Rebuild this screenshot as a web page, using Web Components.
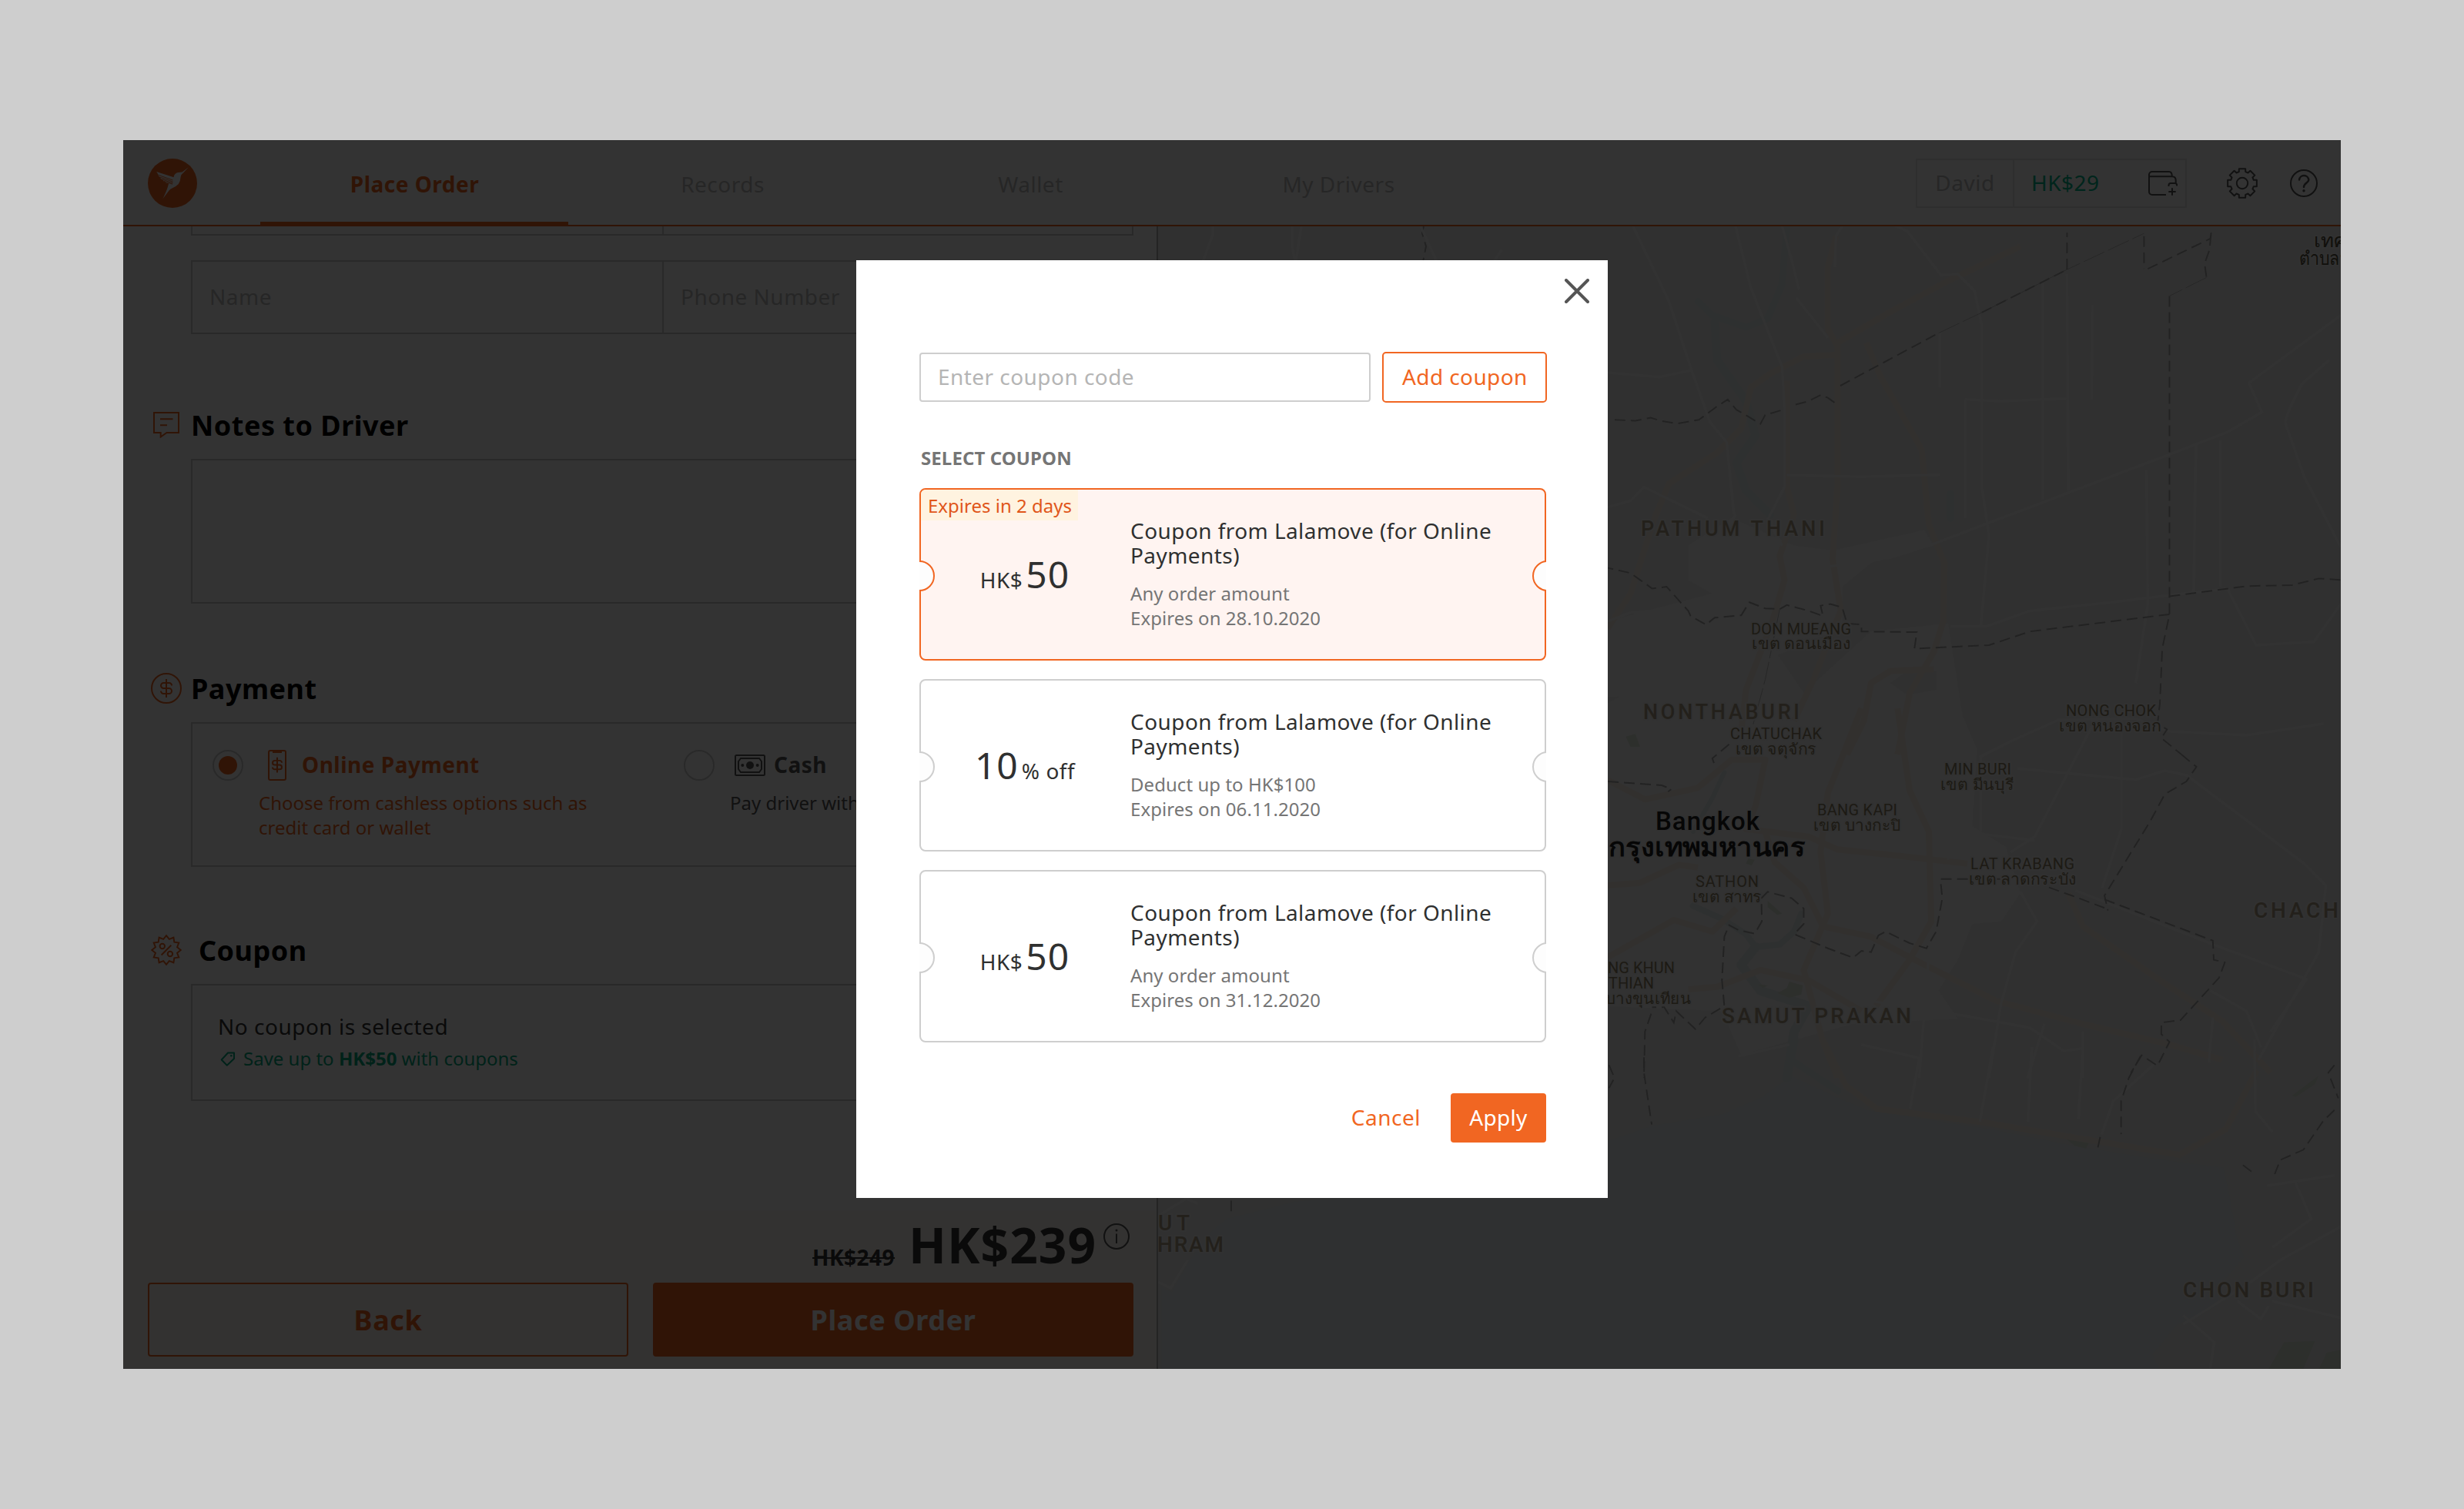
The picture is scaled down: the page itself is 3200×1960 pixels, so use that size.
<!DOCTYPE html>
<html lang="en">
<head>
<meta charset="utf-8">
<title>Place Order</title>
<style>
  html, body { margin: 0; height: 100%; background: #cecece; }
  body { font: 28px/40px "Noto Sans", sans-serif; letter-spacing: .5px; color: #333; }
</style>
</head>
<body>
<order-page></order-page>
<script>
const define = (name, html, setup) => {
  const tpl = document.createElement('template');
  tpl.innerHTML = html;
  customElements.define(name, class extends HTMLElement {
    connectedCallback() {
      if (this.shadowRoot) return;
      const root = this.attachShadow({ mode: 'open' });
      root.append(tpl.content.cloneNode(true));
      if (setup) setup(this, root);
    }
  });
};
const polar = (cx, cy, r, deg) => {
  const a = (deg - 90) * Math.PI / 180;
  return (cx + r * Math.cos(a)).toFixed(2) + ' ' + (cy + r * Math.sin(a)).toFixed(2);
};
const gear = () => {
  let d = '';
  for (let i = 0; i < 8; i++) {
    const a = i * 45;
    d += (i ? 'L' : 'M') + polar(20, 20, 15.4, a - 16) + 'L' + polar(20, 20, 19.3, a - 12.5)
       + 'L' + polar(20, 20, 19.3, a + 12.5) + 'L' + polar(20, 20, 15.4, a + 16);
  }
  return d + 'Z';
};
const burst = () => {
  let d = '';
  for (let i = 0; i < 12; i++) d += (i ? 'L' : 'M') + polar(20, 20, 18.8, i * 30) + 'L' + polar(20, 20, 14.6, i * 30 + 15);
  return d + 'Z';
};
const DOLLAR = 'M27 16.500v-.3a3.200 3.200 0 0 0-3.200-3.200h-7.300a3.500 3.500 0 0 0 0 7h7a3.500 3.500 0 0 1 0 7h-7.300a3.200 3.200 0 0 1-3.200-3.200v-.3M20 8v24';
const ICONS = {
  logo: [64, 64, '<g stroke="none"><circle cx="32" cy="32" r="32" fill="#f16622"/><path fill="#fff" d="M52.800 11.200 46 18.600Q43.300 20.500 42.700 23.500 42.300 29.500 39.800 33 36 37 31.500 38.500 29 39.500 27.500 41.500L19.400 52.300Q25 41 26.800 33.500L27.500 32.600 23.600 31.600 22.500 30 20.500 29.200 19 27.200 17 26.200 15.800 24 14 22.800 13.500 20.800 11.200 17 33.600 24.300Q33.800 20.500 36.800 18.900 39 17.700 44.600 17.600Z"/></g><path stroke="#f16622" stroke-width=".9" d="M14 21.500 32.500 28M16 24.300 32.500 30M18.500 27 32.500 31.800M21 29.500 32 33.200"/>'],
  wallet: [38, 32, '<path d="M23 31H5a4 4 0 0 1-4-4V5a4 4 0 0 1 4-4h22q3.800 0 3.800 6M1 4v3.200h30q4.700 0 4.700 5V16M26.500 20v-1.500q0-2.500 2.500-2.500h6q2.300 0 2.300 3.500M31 22.300v9.500M26.300 27h9.400"/>'],
  gear: [40, 40, `<path stroke-linejoin="round" d="${gear()}"/><circle cx="20" cy="20" r="7.200"/>`],
  help: [36, 36, '<circle cx="18" cy="18" r="17"/><path stroke-width="2.500" stroke-linecap="round" d="M12 13.500a6.200 6.200 0 0 1 12.300 0C24.300 17.500 18 17.800 18 23"/><circle cx="18" cy="27.700" r="1.700" fill="currentColor" stroke="none"/>'],
  note: [34, 34, '<path d="M1 1H33V27H17.500L9.700 32.500V27H1ZM9 9.200H25.500M9 17.200H18"/>'],
  money: [40, 40, `<circle cx="20" cy="20" r="19"/><path d="${DOLLAR}"/>`],
  percent: [40, 40, `<path stroke-linejoin="miter" d="${burst()}"/><circle cx="14.800" cy="15" r="3.200"/><circle cx="24.900" cy="25" r="3.200"/><path d="M26.300 13.800 13.600 26.500"/>`],
  phone: [24, 40, `<rect x="1" y="1" width="22" height="38" rx="2"/><path fill="currentColor" stroke="none" d="M6 1H18V4H6Z"/><path transform="translate(-5 3.200) scale(.85 .82)" stroke-width="2.400" d="${DOLLAR}"/>`],
  cash: [40, 28, '<rect x="1" y="1" width="38" height="26" rx="1.500"/><path d="M8 5H32L35 9V19L32 23H8L5 19V9Z"/><circle cx="20" cy="14" r="5" fill="currentColor" stroke="none"/><circle cx="10.300" cy="14" r="2" fill="currentColor" stroke="none"/><circle cx="29.700" cy="14" r="2" fill="currentColor" stroke="none"/>'],
  tag: [20, 20, '<path stroke-linejoin="round" d="M10 1.500H18V9L8.800 17.800 1.700 10.500Z"/><circle cx="14.300" cy="5.300" r="1.300" fill="currentColor" stroke="none"/>'],
  info: [34, 34, '<circle cx="17" cy="17" r="16"/><path d="M17 13.500V26"/><circle cx="17" cy="9" r="1.500" fill="currentColor" stroke="none"/>'],
  close: [32, 32, '<path stroke-width="4" stroke-linecap="round" d="M2 2 30 30M30 2 2 30"/>']
};
define('ui-icon', '<style>:host{display:block;flex:none;line-height:0}svg{display:block}</style>', (el, root) => {
  const [w, h, body] = ICONS[el.getAttribute('name')];
  root.innerHTML += `<svg width="${w}" height="${h}" viewBox="0 0 ${w} ${h}" fill="none" stroke="currentColor" stroke-width="2">${body}</svg>`;
});

define('nav-tab', `<style>
  :host{display:flex;justify-content:center;width:400px;height:112px;box-sizing:border-box;padding:37px 0 0 1px;color:#bdbdbd}
  :host([active]){color:#f16622;font-weight:700;border-bottom:6px solid #f16622}
</style><slot></slot>`);

define('top-bar', `<style>
  :host{display:flex;height:112px;box-sizing:border-box;border-bottom:2px solid #f16622;background:#fff;padding-left:32px}
  .logo{margin:24px 82px 0 0}
  nav{display:flex}
  .tools{display:flex;align-items:flex-start;margin:24px 30px 0 auto;color:#555}
  .acct{display:flex;box-sizing:border-box;width:352px;height:64px;border:2px solid #e3e3e3;line-height:58px;color:#bdbdbd}
  .name{width:124px;border-right:2px solid #e3e3e3;text-align:center}
  .bal{color:#00b98c;padding-left:22px;flex:1}
  .acct ui-icon{margin:14px 10px 0 0;color:#555}
  .gear{margin:12px 0 0 52px}.help{margin:14px 0 0 42px}
</style>
<ui-icon class="logo" name="logo"></ui-icon>
<nav><nav-tab active>Place Order</nav-tab><nav-tab>Records</nav-tab><nav-tab>Wallet</nav-tab><nav-tab>My Drivers</nav-tab></nav>
<div class="tools">
  <div class="acct"><span class="name">David</span><span class="bal">HK$29</span><ui-icon name="wallet"></ui-icon></div>
  <ui-icon class="gear" name="gear"></ui-icon><ui-icon class="help" name="help"></ui-icon>
</div>`);

define('section-title', `<style>
  :host{display:flex;align-items:center;height:48px;margin-left:36px;gap:12px;font-size:36px;font-weight:700;letter-spacing:.5px;color:#000}
  .i{width:40px;display:flex;justify-content:center;color:#f16622}
  .t{padding-top:2px}
</style><span class="i"></span><span class="t"><slot></slot></span>`, (el, root) => {
  root.querySelector('.i').innerHTML = `<ui-icon name="${el.getAttribute('icon')}"></ui-icon>`;
});

define('field-box', `<style>
  :host{display:flex;box-sizing:border-box;margin-left:88px;width:1224px;border:2px solid #cecece}
</style><slot></slot>`);

define('pay-option', `<style>
  :host{display:block;flex:none;width:612px;color:#555}
  :host([checked]){color:#f16622}
  .row{display:flex;align-items:center;height:40px}
  .radio{width:40px;height:40px;box-sizing:border-box;border:2px solid #cecece;border-radius:50%;display:flex;align-items:center;justify-content:center}
  :host([checked]) .radio::after{content:"";width:24px;height:24px;border-radius:50%;background:#f16622}
  .label{font-weight:700;line-height:38px;padding-bottom:2px}
  p{margin:13px 0 0 60px;width:460px;font-size:24px;line-height:32px;letter-spacing:0}
</style>
<div class="row"><span class="radio"></span><slot name="icon"></slot><span class="label"><slot name="label"></slot></span></div>
<p><slot></slot></p>`);

define('price-footer', `<style>
  :host{display:block;height:206px;box-sizing:border-box;background:#fffaf3;padding:0 30px 0 32px}
  .price{display:flex;justify-content:flex-end;align-items:flex-start;height:94px;padding-right:5px;color:#333;font-weight:700}
  s{margin:41px 18px 0 0}
  b{font-weight:700;font-size:64px;line-height:88px;letter-spacing:1px;margin-top:1px}
  ui-icon{margin:17px 0 0 9px;color:#555}
  .btns{display:flex;gap:32px}
  .btns div{width:624px;height:96px;box-sizing:border-box;border:2px solid #f16622;border-radius:4px;color:#f16622;font-size:36px;font-weight:700;letter-spacing:.6px;line-height:94px;text-align:center}
  .btns .main{background:#f16622;color:#fff}
</style>
<div class="price"><s>HK$249</s><b>HK$239</b><ui-icon name="info"></ui-icon></div>
<div class="btns"><div>Back</div><div class="main">Place Order</div></div>`);

define('order-form', `<style>
  :host{display:flex;flex-direction:column;width:1342px;height:1484px;background:#fff;border-right:2px solid #b5b5b5}
  .cut{height:12px;border-top:0}
  .contact{height:96px;margin-top:32px;line-height:90px;color:#bdbdbd}
  .half{width:610px;border-right:2px solid #cecece}
  .contact .half,.contact .rest{padding-left:22px}
  .contact .half{width:588px}
  .t1{margin-top:94px}.t2{margin-top:86px}.t3{margin-top:84px;gap:22px}
  .notes{height:188px;margin-top:20px}
  .pay{height:188px;margin-top:20px;padding:34px 26px}
  .coupon{height:152px;margin-top:20px;padding:33px;flex-direction:column;color:#333}
  .save{display:flex;font-size:24px;line-height:36px;letter-spacing:0;color:#00a87e;margin-top:4px}
  .save ui-icon{margin:9px 10px 0 3px}
  .phone{margin:0 20px 0 32px}.cash{margin:0 11px 0 26px}
  price-footer{margin-top:auto}
</style>
<field-box class="cut"><div class="half"></div></field-box>
<field-box class="contact"><div class="half">Name</div><div class="rest">Phone Number</div></field-box>
<section-title class="t1" icon="note">Notes to Driver</section-title>
<field-box class="notes"></field-box>
<section-title class="t2" icon="money">Payment</section-title>
<field-box class="pay">
  <pay-option checked><ui-icon slot="icon" class="phone" name="phone"></ui-icon><span slot="label">Online Payment</span>Choose from cashless options such as credit card or wallet</pay-option>
  <pay-option><ui-icon slot="icon" class="cash" name="cash"></ui-icon><span slot="label">Cash</span>Pay driver with</pay-option>
</field-box>
<section-title class="t3" icon="percent">Coupon</section-title>
<field-box class="coupon"><div>No coupon is selected</div><div class="save"><ui-icon name="tag"></ui-icon><span>Save up to <b>HK$50</b> with coupons</span></div></field-box>
<price-footer></price-footer>`);

/* Map geometry is stored per survey sheet: origin and scale of each sheet, then its points. */
const SHEET = { a: [2080, 280, 1.6, 2.24], b: [2080, 920, 1.6, 3], c: [1480, 1350, .9924, 3] };
const line = (s, pts) => {
  const [ox, oy, sx, sy] = SHEET[s], n = pts.trim().split(/[ ,]+/).map(Number);
  let d = '';
  for (let i = 0; i < n.length; i += 2) d += (i ? 'L' : 'M') + (ox + n[i] / sx).toFixed(1) + ' ' + (oy + n[i + 1] / sy).toFixed(1);
  return d;
};
const BORDERS = [
  ['a','27,594 70,597 102,588 125,598 158,605 202,594 240,555 262,535 280,565 305,585 330,606 340,580 372,567'],
  ['a','403,550 430,540 455,522 470,530 484,544'],
  ['a','496,495 700,342'], ['a','967,157 967,50'], ['a','790,282 967,157'], ['a','1127,60 1127,155'],
  ['a','1135,155 1265,67 1267,45 1263,100 1253,140 1257,180'], ['a','1180,234 1180,1108 1180,1160 1165,1260 1160,1420 1155,1480 1175,1495 1163,1520 1205,1568'],
  ['a','1180,1108 1340,1078 1435,1075 1490,1056 1536,1060'],
  ['a','1180,1160 890,1210 805,1250 650,1260 655,1212 540,1210 540,1190 510,1187 500,1140 475,1130 455,1135 460,1165 430,1150 385,1133 370,1145 340,1143 307,1125 290,1163 235,1170 217,1190 185,1165 180,1150 135,1080 105,1085 60,1040 13,1025'],
  ['b','1205,180 1236,228 1215,285 1170,335 1140,440 1045,730 1052,788'],
  ['b','1045,745 1270,905 1272,980 1295,990 1283,1050 1203,1215 1163,1225 1163,1270 1180,1300 1155,1393 1122,1352 1100,1420'],
  ['c','1290,65 1275,150 1265,240 1265,370'], ['c','1238,380 1235,422'],
  ['b','265,140 230,195 235,222'], ['b','13,285 125,300 145,315 138,325'],
  ['b','1045,778 985,735 925,695'], ['b','705,665 830,665'],
  ['b','705,685 708,740 695,870 675,935 640,915 590,870 575,885 560,950 540,945 523,972 470,935 400,880 420,840 420,780 395,740 345,715 332,740 333,830 318,878 285,865 265,845 255,890 250,1060 255,1160 215,1205 195,1250 155,1180 150,1225 130,1165 105,1165'],
  ['b','103,1190 90,1260 88,1440'], ['c','650,70 650,130 660,332'],
  ['c','605,100 612,150 605,190'], ['c','118,628 118,686'],
  ['c','1540,100 1532,130 1545,230'], ['c','1540,275 1525,320 1500,430 1470,470 1463,525'], ['c','1433,515 1420,485']
];
/* Stretches where the boundary is drawn as a hairline beside a road. */
const HAIRLINES = [['a','700,342 790,282 967,157 1127,52'], ['a','370,1145 340,1350 315,1480'], ['a','1257,180 1180,234']];
const ROADS = [
  ['a','278,30 310,210 375,440 380,560 380,790 345,885 375,960'], ['a','65,30 140,250 187,450 225,600 260,660 275,870'],
  ['a','610,30 635,45 705,173 740,170 775,220 790,320 790,790 805,930 788,1195'], ['a','405,240 470,355'],
  ['a','1536,290 1345,487 1372,572 1300,630 1180,695 690,955 600,995 430,1030'], ['a','1420,600 1460,760 1536,965'],
  ['a','917,190 917,825'], ['a','967,170 970,800'], ['a','1020,260 1018,535'], ['a','755,535 755,880'], ['a','755,535 830,540 967,532'],
  ['a','703,340 703,500'], ['a','1132,740 1135,1130 1110,1360'], ['a','1235,665 1230,1100'], ['a','1286,655 1286,1080'],
  ['a','385,755 540,760 703,754'], ['a','13,848 60,830 88,790 220,880'], ['a','13,1180 60,1155 120,1150 310,1110'],
  ['a','375,30 395,130 410,215'], ['a','500,30 487,60 485,150'], ['a','187,450 120,470 13,457'],
  ['a','725,1195 800,1195 890,1150 1060,1125 1180,1105 1300,1085'], ['a','13,1235 60,1215 200,1248 240,1290'],
  ['a','120,1150 98,1280 100,1568'], ['a','1300,1085 1335,1180 1360,1250 1480,1240 1536,1130'],
  ['a','245,1110 245,950 278,870'], ['a','1512,420 1455,490 1430,560 1420,600'],
  ['b','785,190 860,120 950,45 1110,40 1180,90 1340,105 1500,60'], ['b','865,235 1110,278 1170,243 1215,260 1460,605 1505,690 1490,950 1365,1370'],
  ['b','985,710 1270,920 1465,1055 1390,1260'], ['b','540,1135 760,1200 890,1245 960,1335 1000,1325'],
  ['b','788,190 788,480'], ['b','1030,30 900,500 850,560'], ['b','1080,30 1080,470 1040,700'],
  ['b','870,715 905,830 860,950 830,1150 805,1440'], ['b','720,590 720,510 790,490 900,515'],
  ['b','285,1355 390,1310'], ['b','540,1310 665,1365'], ['b','920,1230 885,1440'], ['b','1000,1260 1000,1440'], ['b','13,560 150,520 250,530'],
  ['b','680,960 660,1440'], ['b','1265,1100 1340,1180 1370,1320'], ['b','1270,1205 1262,1380'],
  ['c','1005,70 993,270'], ['c','1100,30 1083,320'], ['c','1150,30 1145,320'], ['c','1215,60 1210,310'], ['c','1240,370 1255,240 1310,90'],
  ['c','1437,0 1438,280 1460,360'], ['c','1453,570 1540,530'], ['c','1490,560 1510,700 1460,810'], ['c','1548,730 1470,860 1430,950 1345,1110'],
  ['c','1345,1075 1385,1180 1380,1280'], ['c','1460,1020 1548,1085'], ['c','1415,1020 1445,1090 1455,1040'], ['c','28,680 60,620 75,640'], ['c','62,860 40,970 24,945']
];
const HIGHWAYS = [
  ['a','870,90 720,190 600,280 490,370'], ['a','487,60 470,150 470,330 490,380 490,790 480,1000 497,1150 440,1350 400,1470'],
  ['a','550,370 580,470 665,680 680,900 712,1010 710,1180 690,1270 640,1390 615,1568'],
  ['a','490,405 420,410 350,460 310,500 290,620 240,690 140,780 110,880 60,1100 13,1200'],
  ['a','385,480 385,790 400,870 370,990 380,1060 355,1180 300,1380 290,1500'], ['a','690,1320 600,1325 560,1360 545,1470 510,1568'],
  ['b','540,0 470,330 455,560 470,800 420,1020 460,1300 490,1440'], ['b','615,0 640,320 680,480 685,830 640,980 570,1160'],
  ['b','13,280 90,355 200,310 270,200 340,200 320,380 300,470 430,500 490,550 620,575 760,605'],
  ['b','13,970 150,825 230,870 280,780'], ['b','340,480 360,600 420,700 460,850 560,890 640,970 820,1140 1000,1230 1180,1310 1290,1370'],
  ['b','180,1095 240,1085 330,1020 430,1060 540,1180'], ['b','13,690 80,680 160,610 200,620'],
  ['b','970,720 1000,850 1160,1060 1290,1220 1390,1420'], ['c','880,0 910,180 950,270 1090,325 1200,380 1340,450 1400,350 1440,120']
];
const WATER = [
  ['a','385,30 375,200 345,300 300,325 230,290 200,250', 9], ['a','235,310 240,420 300,540 320,640 280,720 300,800 350,870', 11],
  ['b','255,250 230,350 190,480', 6], ['b','190,770 250,820 300,880 320,930 370,920 400,870 415,800', 8],
  ['b','320,930 290,1000 330,1100 430,1160 400,1260 385,1440', 12], ['c','845,0 840,80 900,200', 9]
];
const LABELS = [
  ['PATHUM THANI',2131,695.5,239,27,'p'],['NONTHABURI',2134,934,203,27,'p'],['SAMUT PRAKAN',2236,1328.5,246,28,'p'],['CHON BURI',2835,1684.500,170,28,'p'],
  ['UT',1504,1597.5,41,28,'p'],['HRAM',1503,1625.5,86,28,'p'],['CHACHO',2927,1191.5,133,28,'p'],
  ['DON MUEANG',2274,823.8,130,20,'d'],['เขต ดอนเมือง',2275,843,129,20,'d'],['NONG CHOK',2683,929.6,117,20,'d'],['เขต หนองจอก',2674,949.6,133,20,'d'],
  ['CHATUCHAK',2247,960,119,20,'d'],['เขต จตุจักร',2254,979.5,105,20,'d'],['MIN BURI',2525,1006,87,20,'d'],['เขต มีนบุรี',2520,1026,96,20,'d'],
  ['BANG KAPI',2360,1058.7,104,20,'d'],['เขต บางกะปิ',2355,1078.5,114,20,'d'],['LAT KRABANG',2559,1129,135,20,'d'],['เขต ลาดกระบัง',2557,1149,140,20,'d'],
  ['SATHON',2202,1152,82,20,'d'],['เขต สาทร',2198,1172,90,20,'d'],['NG KHUN',2088,1264,87,20,'d'],['THIAN',2089,1284,59,20,'d'],['บางขุนเทียน',2085,1303.5,111,20,'d'],
  ['Bangkok',2150,1077.7,135,33,'c'],['กรุงเทพมหานคร',2089,1111.7,255,34,'c b'],['เทศ',3005,320.7,42,24,'t'],['ตำบลบ',2986,344,66,24,'t']
];
define('city-map', `<style>
  :host{display:block;width:1536px;height:1484px;background:#f1f1f1;overflow:hidden}
  svg{display:block;font-family:Roboto,"Noto Sans",sans-serif;letter-spacing:0}
  .road{fill:none;stroke:#fafafa;stroke-width:3}.hw{fill:none;stroke:#f8efe6;stroke-width:8;stroke-linejoin:round}
  .water{fill:none;stroke:#e6eff0;stroke-linecap:round;stroke-linejoin:round}
  .bd{fill:none;stroke:#acacac;stroke-width:2;stroke-dasharray:14 7}
  .hair{fill:none;stroke:#c0c0c0;stroke-width:1;stroke-dasharray:30 5}
  text{paint-order:stroke;stroke:#f5f5f5;stroke-width:4;stroke-linejoin:round}
  .p{fill:#afa287;font-weight:500}.d{fill:#8f8366}.t{fill:#55503c}.c{fill:#222;font-weight:500}.b{font-weight:600}
</style>`, (el, root) => {
  const sea = line('c', '40,970 62,850 90,740 110,690 200,620 500,560 603,385 660,325 750,280 800,215 840,130 900,215 940,265 1100,340 1200,400 1300,450 1400,490 1408,600 1418,770 1428,850 1400,950 1390,1050 1340,1120 1310,1230 1320,1300 24,1300 24,945') + 'Z';
  const urban = line('b', '13,-20 180,-190 350,-250 420,-60 560,-300 720,-330 750,30 780,160 770,460 840,540 870,720 830,830 770,840 740,980 700,1100 740,1210 520,1230 290,1350 250,1180 13,1160') + 'Z';
  const urban2 = line('a', '180,960 270,880 400,960 480,975 670,915 690,960 560,1010 500,1080 500,1200 160,1400 13,1400 13,1180 230,1100 180,1060') + 'Z';
  const text = LABELS.map(([t, x, y, w, s, c]) => {
    const thai = /[\u0E00-\u0E7F]/.test(t);
    return `<text class="${c}" x="${x}" y="${y}" font-size="${s}" textLength="${w}" lengthAdjust="${thai ? 'spacingAndGlyphs' : 'spacing'}">${t}</text>`;
  }).join('');
  root.innerHTML += `<svg width="1536" height="1484" viewBox="1504 294 1536 1484">
    <path fill="#f8f8f8" d="${urban}${urban2}"/>
    <path fill="#e8eff2" stroke="#edf0f0" stroke-width="8" d="${sea}"/>
    <path fill="#f0f0f0" d="${line('a', '600,1360 640,1320 695,1325 695,1380 635,1395')}Z"/>
    <path class="water" stroke-width="10" d="${line('a', '725,810 725,880')}"/>
    ${WATER.map(([s, p, w]) => `<path class="water" stroke-width="${w}" d="${line(s, p)}"/>`).join('')}
    <g fill="#e2e9dc"><path d="${line('b', '365,1110 385,1090 390,1065 418,1080 415,1115 390,1128')}Z"/><path d="${line('b', '50,110 70,100 80,150 60,150')}Z"/><path d="${line('b', '345,750 375,800 365,805 345,775')}Z"/><path d="${line('b', '305,585 318,590 312,612 300,605')}Z"/><path d="${line('b', '325,1075 345,1080 335,1090')}Z"/>
    <path d="${line('c', '1475,1180 1515,1175 1500,1284 1455,1284')}Z"/><path d="${line('c', '1530,1220 1548,1210 1548,1284 1520,1284')}Z"/><path d="${line('c', '1485,220 1520,140 1515,175 1490,225')}Z"/><path d="${line('c', '1195,390 1225,395 1220,425 1205,415')}Z"/></g>
    ${HIGHWAYS.map(([s, p]) => `<path class="hw" d="${line(s, p)}"/>`).join('')}
    ${ROADS.map(([s, p]) => `<path class="road" d="${line(s, p)}"/>`).join('')}
    ${HAIRLINES.map(([s, p]) => `<path class="hair" d="${line(s, p)}"/>`).join('')}
    ${BORDERS.map(([s, p]) => `<path class="bd" d="${line(s, p)}"/>`).join('')}
    <path class="bd" d="M1849 294 1847 303 1852 320 1848 340"/>
    <path class="road" d="M1845 294 1866 340M1575 294V305L1562 340M1678 294V320L1682 340M1690 294 1683 340M1950 325 1940 340"/>
    ${text}</svg>`;
});

define('coupon-card', `<style>
  :host{display:block;position:relative;overflow:hidden;width:814px;height:224px;--line:#cecece;--fill:#fff}
  :host([selected]){--line:#f16622;--fill:#fff4f1}
  .card{display:flex;box-sizing:border-box;height:224px;border:2px solid var(--line);border-radius:8px;background:var(--fill)}
  .card::before,.card::after{content:"";position:absolute;top:94px;width:36px;height:36px;border:2px solid var(--line);border-radius:50%;background:#fdfdfd}
  .card::before{left:-20px}.card::after{right:-22px}
  .amount{display:flex;justify-content:center;align-items:baseline;gap:4px;box-sizing:border-box;width:272px;height:56px;margin-top:82px;padding-right:2px;color:#2f3030}
  .amount ::slotted(b){font-weight:400;font-size:48px;line-height:56px;letter-spacing:1px}
  .info{width:490px;padding-top:37px;line-height:32px;letter-spacing:.43px}
  .info p{margin:18px 0 0;font-size:24px;letter-spacing:.05px;color:#757575}
  .tag{position:absolute;left:2px;top:2px;width:195px;height:40px;padding-left:9px;border-top-left-radius:6px;background:#fff3e0;color:#e0561a;font-size:24px;line-height:41px;letter-spacing:0}
  .title{color:#2f3030}
</style>
<div class="card">
  <div class="amount"><slot name="amount"></slot></div>
  <div class="info"><div class="title"><slot></slot></div><p><slot name="terms"></slot></p></div>
</div>`, (el, root) => {
  if (el.hasAttribute('notice')) {
    const tag = document.createElement('div');
    tag.className = 'tag';
    tag.textContent = el.getAttribute('notice');
    root.append(tag);
  }
});

define('coupon-dialog', `<style>
  :host{display:flex;flex-direction:column;box-sizing:border-box;width:976px;height:1218px;padding:24px 79px 72px 82px;background:#fff}
  .close{align-self:flex-end;margin-right:-55px;color:#555}
  .form{display:flex;align-items:center;justify-content:space-between;height:66px;margin-top:63px}
  .input{width:586px;height:64px;box-sizing:border-box;border:2px solid #cecece;border-radius:4px;padding-left:22px;line-height:58px;color:#b5b5b5;letter-spacing:.45px}
  .add{width:214px;height:66px;box-sizing:border-box;border:2px solid #f16622;border-radius:5px;padding-left:24px;line-height:60px;color:#f16622;letter-spacing:.4px}
  h2{margin:56px 0 23px 2px;font-size:24px;line-height:32px;letter-spacing:.1px;color:#757575}
  .list{display:flex;flex-direction:column;gap:24px}
  .actions{display:flex;justify-content:flex-end;gap:39px;margin:66px 1px 0 0;line-height:62px;color:#f16622}
  .apply{width:124px;height:64px;border-radius:4px;background:#f16622;color:#fff;text-align:center;letter-spacing:.3px}
</style>
<ui-icon class="close" name="close"></ui-icon>
<div class="form"><div class="input">Enter coupon code</div><div class="add">Add coupon</div></div>
<h2>SELECT COUPON</h2>
<div class="list">
  <coupon-card selected notice="Expires in 2 days"><span slot="amount">HK$</span><b slot="amount">50</b>Coupon from Lalamove (for Online Payments)<span slot="terms">Any order amount<br>Expires on 28.10.2020</span></coupon-card>
  <coupon-card><b slot="amount">10</b><span slot="amount">% off</span>Coupon from Lalamove (for Online Payments)<span slot="terms">Deduct up to HK$100<br>Expires on 06.11.2020</span></coupon-card>
  <coupon-card><span slot="amount">HK$</span><b slot="amount">50</b>Coupon from Lalamove (for Online Payments)<span slot="terms">Any order amount<br>Expires on 31.12.2020</span></coupon-card>
</div>
<div class="actions"><span>Cancel</span><div class="apply">Apply</div></div>`);

define('order-page', `<style>
  :host{display:flex;align-items:flex-start;justify-content:center;width:3200px;height:1960px;box-sizing:border-box;padding-top:182px;overflow:hidden;background:#cecece}
  .app{position:relative;width:2880px;height:1596px;overflow:hidden}
  .body{display:flex}
  .dim{position:absolute;inset:0;display:flex;justify-content:center;align-items:flex-start;padding-top:156px;background:rgba(0,0,0,.8)}
</style>
<div class="app">
  <top-bar></top-bar>
  <div class="body"><order-form></order-form><city-map></city-map></div>
  <div class="dim"><coupon-dialog></coupon-dialog></div>
</div>`);
</script>
</body>
</html>
